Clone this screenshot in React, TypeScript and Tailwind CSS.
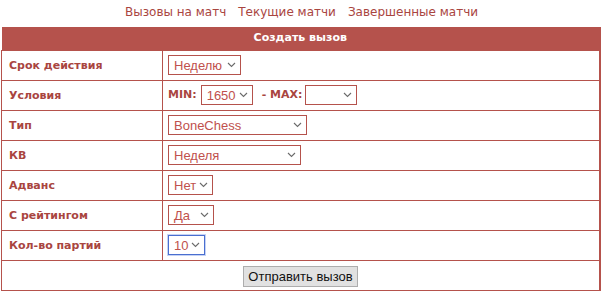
import React from "react";

const LBL = "#a9453f";
const RED = "#b5524c";

function Chevron() {
  return (
    <svg width="9" height="6" viewBox="0 0 9 6" className="shrink-0">
      <path d="M1 1 L4.5 4.5 L8 1" fill="none" stroke="#6b6b6b" strokeWidth="1.1" />
    </svg>
  );
}

function Sel({ text, w, focus }: { text: string; w: number; focus?: boolean }) {
  return (
    <div
      className={`flex h-[20px] items-center justify-between bg-white pl-[5px] pr-[4px] text-[13px] leading-none text-[#c0504d] ${
        focus ? "border border-[#4a6fd0] shadow-[0_0_0_1px_#c5d3f5]" : "border border-[#b5524c]"
      }`}
      style={{ width: w, fontFamily: '"Liberation Sans", Arial, sans-serif' }}
    >
      <span>{text}</span>
      <Chevron />
    </div>
  );
}

function Row({ label, children }: { label: string; children: React.ReactNode }) {
  return (
    <tr>
      <td
        className="h-[30px] w-[161px] border border-[#b5524c] p-0 pl-[7px] pt-[3px] text-[11px] font-bold"
        style={{ color: LBL, fontFamily: '"DejaVu Sans", Verdana, sans-serif' }}
      >
        {label}
      </td>
      <td className="h-[30px] border border-[#b5524c] p-0 pl-[5px]">{children}</td>
    </tr>
  );
}

export default function App() {
  return (
    <div className="h-[292px] w-[603px] overflow-hidden bg-white">
      <div
        className="flex h-[27px] items-center justify-center gap-[12px] pb-[3px] text-[12px]"
        style={{ color: "#a9453f", fontFamily: '"DejaVu Sans", Tahoma, sans-serif' }}
      >
        <span>Вызовы на матч</span>
        <span>Текущие матчи</span>
        <span>Завершенные матчи</span>
      </div>
      <table className="ml-[1px] w-[600px] border-collapse border-r-2 border-[#b5524c]">
        <tbody>
          <tr>
            <td
              colSpan={2}
              className="h-[23px] p-0 text-center text-[11px] font-bold text-white"
              style={{ backgroundColor: RED, fontFamily: '"DejaVu Sans", Verdana, sans-serif' }}
            >
              Создать вызов
            </td>
          </tr>
          <Row label="Срок действия">
            <Sel text="Неделю" w={73} />
          </Row>
          <Row label="Условия">
            <div className="flex items-center">
              <span
                className="text-[11px] font-bold"
                style={{ color: LBL, fontFamily: '"DejaVu Sans", Verdana, sans-serif' }}
              >
                MIN:
              </span>
              <div className="ml-[4px]">
                <Sel text="1650" w={52} />
              </div>
              <span
                className="ml-[9px] text-[11px] font-bold"
                style={{ color: LBL, fontFamily: '"DejaVu Sans", Verdana, sans-serif' }}
              >
                - MAX:
              </span>
              <div className="ml-[3px]">
                <Sel text="" w={52} />
              </div>
            </div>
          </Row>
          <Row label="Тип">
            <Sel text="BoneChess" w={139} />
          </Row>
          <Row label="КВ">
            <Sel text="Неделя" w={133} />
          </Row>
          <Row label="Адванс">
            <Sel text="Нет" w={45} />
          </Row>
          <Row label="С рейтингом">
            <Sel text="Да" w={46} />
          </Row>
          <Row label="Кол-во партий">
            <Sel text="10" w={37} focus />
          </Row>
          <tr>
            <td colSpan={2} className="h-[30px] border border-[#b5524c] p-0 text-center">
              <button
                className="inline-flex h-[21px] w-[115px] items-center justify-center border border-[#adadad] bg-[#e1e1e1] text-[13px] text-[#111]"
                style={{ fontFamily: '"Liberation Sans", Arial, sans-serif' }}
              >
                Отправить вызов
              </button>
            </td>
          </tr>
        </tbody>
      </table>
    </div>
  );
}
